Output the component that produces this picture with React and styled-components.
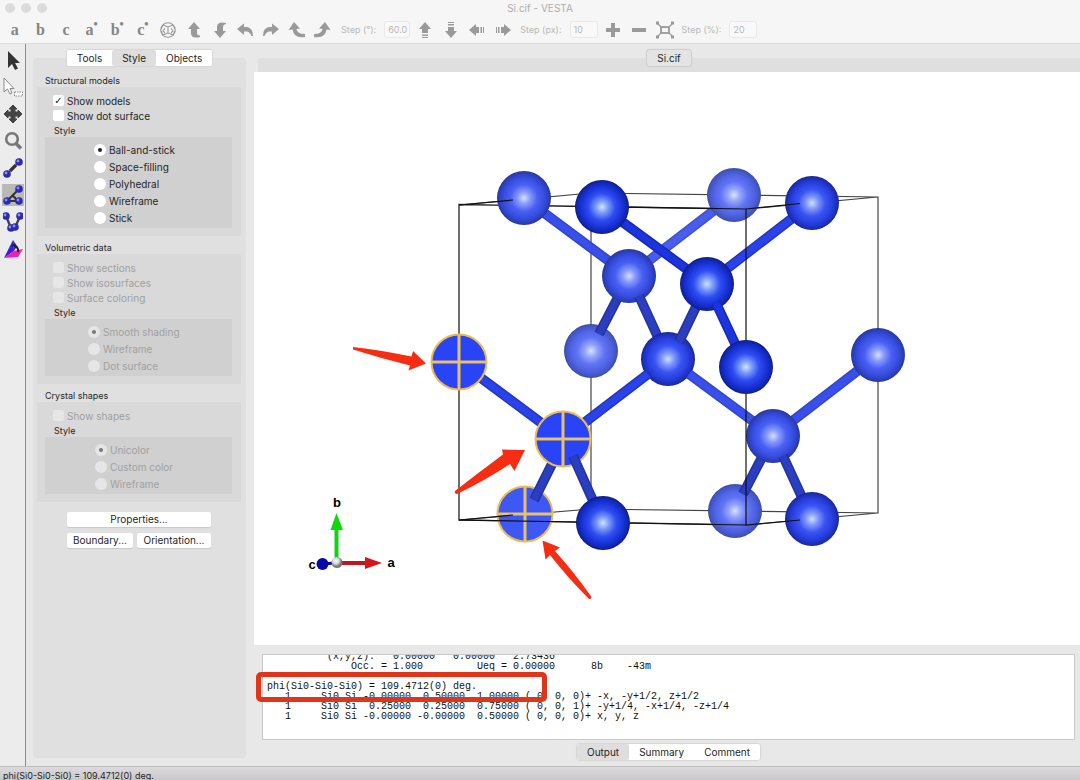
import React, { useState } from 'react';
import styled, { createGlobalStyle } from 'styled-components';

const atoms = {
	a: [524, 198, 2],
	b: [602, 207, 0],
	c: [734, 195, 3],
	d: [812, 203, 1],
	e: [629, 276, 2],
	f: [707, 284, 0],
	g: [591, 351, 3],
	h: [668, 359, 1],
	i: [746, 367, 0],
	j: [878, 355, 2],
	k: [773, 436, 2],
	l: [735, 511, 3],
	m: [812, 519, 1],
	n: [603, 523, 0]
};

const shades = [
	['#d0e6ff', '#7c9dfb', '#2f4df0', '#1a34dc', '#1024a8', '#0a1880'],
	['#d0e2ff', '#819afc', '#3a54f2', '#2840e2', '#1b2eb2', '#16268c'],
	['#d4e2ff', '#8a9dfc', '#4a60f3', '#384ee2', '#2a3db6', '#253694'],
	['#dbe4ff', '#98a8fb', '#6074f4', '#5063e4', '#4153be', '#3c4ca2']
];

const Bond = ({ from, to, depth = 1, dark }) => {
	const edge = dark ? '#22339f' : ['#1529b4', '#2336c0', '#3345ca', '#4051cc'][depth];
	const core = dark ? '#2b3ebf' : ['#1c34e0', '#2942ea', '#394fec', '#485cee'][depth];
	const line = { x1: from[0], y1: from[1], x2: to[0], y2: to[1] };
	return (
		<g>
			<line {...line} stroke={edge} strokeWidth="10" />
			<line {...line} stroke={core} strokeWidth="7" />
		</g>
	);
};

const Atom = ({ id }) => {
	const [x, y, depth] = atoms[id];
	return <circle cx={x} cy={y} r="27" fill={`url(#shade${depth})`} />;
};

const PickedAtom = ({ x, y, fill = '#2844f6' }) => (
	<g stroke="#eebc4e" strokeWidth="2">
		<circle cx={x} cy={y} r="27.5" fill={fill} />
		<path d={`M${x - 28} ${y}H${x + 28}M${x} ${y - 28}V${y + 28}`} strokeWidth="3" />
		<path d={`M${x - 27} ${y}H${x + 27}M${x} ${y - 27}V${y + 27}`} stroke="#dcc893" strokeWidth="1" />
	</g>
);

const Crystal = () => (
	<Scene viewBox="254 72 826 573" role="img" aria-label="Si unit cell">
		<defs>
			{shades.map((stops, i) => (
				<radialGradient id={`shade${i}`} key={i}>
					{stops.map((color, n) => (
						<stop key={n} offset={[0, 0.22, 0.5, 0.74, 0.94, 1][n]} stopColor={color} />
					))}
				</radialGradient>
			))}
			<radialGradient id="origin" cx="0.4" cy="0.35">
				<stop offset="0" stopColor="#fff" />
				<stop offset="0.6" stopColor="#d0d0d0" />
				<stop offset="1" stopColor="#777" />
			</radialGradient>
		</defs>

		{/* far side of the cell */}
		<path
			d="M459 205L591 193L878 197V513L591 509V193M459 520L591 509M746 525L878 513M746 209L878 197"
			fill="none"
			stroke="#444"
			strokeWidth="1.2"
		/>
		<path d="M746 209L459 204.500V520L746 525" fill="none" stroke="#222" strokeWidth="1.3" />

		<Atom id="g" />
		<Bond from={[629, 276]} to={[599, 334]} depth={2} dark />
		<Bond from={atoms.c} to={atoms.e} depth={3} />
		<Bond from={atoms.a} to={atoms.e} depth={2} />
		<Atom id="c" />
		<Atom id="a" />
		<Atom id="e" />
		<Bond from={[639, 296]} to={atoms.h} dark />
		<Atom id="h" />
		<Bond from={atoms.f} to={[679, 342]} dark />
		<Bond from={atoms.b} to={atoms.f} depth={0} />
		<Bond from={atoms.d} to={atoms.f} depth={1} />
		<Atom id="b" />
		<Atom id="d" />
		<Atom id="f" />
		<Bond from={[716, 303]} to={atoms.i} depth={0} />

		<Bond from={[648, 374]} to={[563, 439]} depth={1} />
		<Bond from={[689, 374]} to={atoms.k} depth={2} />
		<Bond from={atoms.j} to={atoms.k} depth={2} />
		<Atom id="j" />
		<Atom id="l" />
		<Bond from={atoms.k} to={[743, 494]} depth={2} dark />
		<Atom id="k" />
		<Bond from={[783, 456]} to={atoms.m} depth={2} dark />
		<Atom id="m" />

		<Bond from={[481, 378]} to={[563, 439]} depth={1} />
		<PickedAtom x={459} y={362} />
		<PickedAtom x={525} y={514} fill="#3e58f6" />
		<Bond from={[552, 464]} to={[534, 500]} dark />
		<PickedAtom x={563} y={439} />
		<Bond from={[573, 456]} to={atoms.n} dark />
		<Atom id="n" />

		{/* edges that pass in front of the atoms */}
		<g fill="none" stroke="#111" strokeWidth="1.2">
			<path d="M629 207.200L746 209L800 203.500M459 205L513 200" />
			<path d="M746 209V340M746 394V525L800 520" />
			<path d="M459 520L577 522M630 523L746 525M459 520L513 515" />
		</g>
		<Atom id="i" />

		<g fill="#f62d12">
			<path d="M353 347Q380 350 411.500 356.500L413 351L426 363.500L408.500 370.500L410 365.500Q380 358 353 349.500Z" />
			<path d="M455 491Q478 473 503 454.500L502 449.500L525 450L514.500 471L510 464Q486 480 457 494Q454 494 455 491Z" />
			<path d="M542.500 540.500L560 547.500L555 551Q574 572 591.500 597Q591 600 588.500 598.500Q568 578 550 555L545.500 559.500Z" />
		</g>

		<path d="M322 564L335 563" stroke="#0a0a90" strokeWidth="3" />
		<circle cx="322.500" cy="564" r="6" fill="#0808a8" />
		<path d="M336.500 560V528" stroke="#12d412" strokeWidth="4" />
		<path d="M336.500 513L343 530H330.500Z" fill="#0fd80f" />
		<path d="M337 563H366" stroke="#c3161c" strokeWidth="4" />
		<path d="M382 563L365 569V557Z" fill="#d5161c" />
		<circle cx="337" cy="562.500" r="5.500" fill="url(#origin)" />
		<AxisName x="337" y="507">b</AxisName>
		<AxisName x="312" y="569">c</AxisName>
		<AxisName x="391" y="567">a</AxisName>
	</Scene>
);

const Glyph = ({ children, size = 20 }) => (
	<svg width={size} height={size} viewBox="0 0 20 20" fill="currentColor" aria-hidden="true">
		{children}
	</svg>
);

const rotations = [
	['Orient freely', <g fill="none" stroke="currentColor" strokeWidth="1.1">
		<circle cx="10" cy="10" r="7.200" />
		<path d="M5 5L10 7L15 5M10 7V13M5 15L10 13L15 15M3 9L5 5M17 9L15 5M3 11L5 15M17 11L15 15M7 8.500L5 11L7 13M13 8.500L15 11L13 13" />
	</g>],
	['Rotate up', <path d="M10 2L16 9H13V13Q13 15.500 16 15.500V17Q7 19 7 13V9H4Z" />],
	['Rotate down', <path d="M10 18L4 11H7V7Q7 1 16 3V4Q13 4.500 13 7V11H16Z" />],
	['Rotate left', <path d="M2 9L9 3.500V7H12Q18 8 18 16H16.500Q15 12 12 11.500H9V15Z" />],
	['Rotate right', <path d="M18 9L11 3.500V7H8Q2 8 2 16H3.500Q5 12 8 11.500H11V15Z" />],
	['Turn counterclockwise', <path d="M7 2L13 8.500L9.500 9Q10 14 18 14V17Q7 19 5.500 9.500L1.500 10Z" />],
	['Turn clockwise', <path d="M13 2L7 8.500L10.500 9Q10 14 2 14V17Q13 19 14.500 9.500L18.500 10Z" />]
];

const moves = [
	['Move up', <path d="M10 2L16 9H13V13H7V9H4ZM7 14.500H13V16H7ZM7 17H13V18H7Z" />],
	['Move down', <path d="M10 18L16 11H13V7H7V11H4ZM7 4H13V5.500H7ZM7 2H13V3H7Z" />],
	['Move left', <path d="M2 10L9 4V7H12V13H9V16ZM13.500 7H15V13H13.500ZM16 7H17V13H16Z" />],
	['Move right', <path d="M18 10L11 4V7H8V13H11V16ZM5 7H6.500V13H5ZM3 7H4V13H3Z" />]
];

const zooms = [
	['Zoom in', <path d="M8 3H12V8H17V12H12V17H8V12H3V8H8Z" />],
	['Zoom out', <path d="M3 8H17V12H3Z" />],
	['Fit to screen', <g fill="none" stroke="currentColor" strokeWidth="1.800">
		<rect x="6" y="7" width="8" height="6" />
		<path d="M6 7L2 3M14 7L18 3M6 13L2 17M14 13L18 17" strokeWidth="1.300" />
		<path d="M1 3H4M1 17H4M16 3H19M16 17H19" strokeWidth="3" />
	</g>]
];

const Ball = ({ x, y }) => (
	<g>
		<circle cx={x} cy={y} r="3.800" fill="#2a2ab4" />
		<circle cx={x - 1} cy={y - 1} r="1.400" fill="#9292e8" />
	</g>
);

const tools = [
	['Rotate', <path d="M5 1V18L9 14L12 20L15 18.500L12 13H17Z" fill="#333" />],
	['Select', <g fill="#fff" stroke="#888">
		<path d="M1 1V15L4.500 12L7 17L9 16L7 11.500H11Z" />
		<rect x="11.500" y="15" width="8" height="4" strokeDasharray="1.500 1" />
	</g>],
	['Translate', <path d="M10 1L14 5H12V8H15V6L19 10L15 14V12H12V15H14L10 19L6 15H8V12H5V14L1 10L5 6V8H8V5H6Z" fill="#444" stroke="#444" />],
	['Magnify', <g fill="none" stroke="#777">
		<circle cx="9" cy="8" r="5.800" strokeWidth="2.600" />
		<path d="M13 12.500L18 17.500" strokeWidth="3.500" />
	</g>],
	['Distance', <g>
		<path d="M4 16L16 4" stroke="#666" strokeWidth="1.500" />
		<path d="M7 13L13 7" stroke="#333" strokeWidth="3.200" />
		<Ball x={4} y={16} /><Ball x={16} y={4} />
	</g>],
	['Bond angle', <g>
		<path d="M16 4L4 16H16M9 11Q13 12 13 16" fill="none" stroke="#333" strokeWidth="2" />
		<Ball x={16} y={4} /><Ball x={4} y={16} /><Ball x={16} y={16} />
	</g>],
	['Dihedral angle', <g>
		<path d="M3 4L8 16H12L17 4" fill="none" stroke="#444" strokeWidth="2.400" />
		<Ball x={3} y={4} /><Ball x={8} y={16} /><Ball x={12} y={15} /><Ball x={17} y={4} />
	</g>],
	['Interfacial angle', <g>
		<path d="M10 1L1 19L11 12Z" fill="#3c1cd8" />
		<path d="M10 1L11 12L14 7Z" fill="#2020a0" />
		<path d="M1 19L11 12L20 10L15 18Z" fill="#f01cb4" />
		<path d="M9 6Q16 7 15 13" fill="none" stroke="#222" strokeWidth="2" />
	</g>]
];

const output = [
	'          (x,y,z):   0.00000   0.00000   2.73436',
	'              Occ. = 1.000         Ueq = 0.00000      8b    -43m',
	'',
	'phi(Si0-Si0-Si0) = 109.4712(0) deg.',
	'   1     Si0 Si -0.00000  0.50000  1.00000 ( 0, 0, 0)+ -x, -y+1/2, z+1/2',
	'   1     Si0 Si  0.25000  0.25000  0.75000 ( 0, 0, 1)+ -y+1/4, -x+1/4, -z+1/4',
	'   1     Si0 Si -0.00000 -0.00000  0.50000 ( 0, 0, 0)+ x, y, z'
].join('\n');

const IconGroup = ({ items }) =>
	items.map(([name, drawing]) => (
		<ToolButton key={name} aria-label={name}>
			<Glyph>{drawing}</Glyph>
		</ToolButton>
	));

const Step = ({ label, value, width }) => (
	<StepLabel>
		{label}
		<StepInput defaultValue={value} $width={width} />
	</StepLabel>
);

const ModelGroup = ({ title, checks, name, options, indent, disabled }) => (
	<Group>
		<GroupTitle>{title}</GroupTitle>
		<GroupBox>
			{checks.map(([label, checked]) => (
				<Option key={label} $height={15} $disabled={disabled}>
					<Check type="checkbox" defaultChecked={checked} disabled={disabled} />
					{label}
				</Option>
			))}
			<StyleTitle>Style</StyleTitle>
			<StyleBox $indent={indent}>
				{options.map((label, index) => (
					<Option key={label} $height={17} $disabled={disabled}>
						<Radio type="radio" name={name} defaultChecked={index === 0} disabled={disabled} />
						{label}
					</Option>
				))}
			</StyleBox>
		</GroupBox>
	</Group>
);

const Tabs = ({ names, initial }) => {
	const [active, setActive] = useState(initial);
	return (
		<TabBar>
			{names.map(name => (
				<Tab key={name} $active={name === active} onClick={() => setActive(name)}>
					{name}
				</Tab>
			))}
		</TabBar>
	);
};

export const App = () => (
	<Window>
		<GlobalStyle />
		<Header>
			<TitleBar>
				<Lights>
					<Light />
					<Light />
					<Light />
				</Lights>
				<Title>Si.cif - VESTA</Title>
			</TitleBar>
			<Toolbar>
				<ViewButtons>
					{['a', 'b', 'c'].map(axis => (
						<AxisButton key={axis}>{axis}</AxisButton>
					))}
					{['a', 'b', 'c'].map(axis => (
						<AxisButton key={axis}>
							{axis}
							<Star>•</Star>
						</AxisButton>
					))}
					<IconGroup items={rotations} />
				</ViewButtons>
				<Step label="Step (°):" value="60.0" width={26} />
				<Buttons>
					<IconGroup items={moves} />
				</Buttons>
				<Step label="Step (px):" value="10" width={28} />
				<Buttons>
					<IconGroup items={zooms} />
				</Buttons>
				<Step label="Step (%):" value="20" width={28} />
			</Toolbar>
		</Header>
		<Body>
			<ToolStrip>
				{tools.map(([name, drawing]) => (
					<StripButton key={name} aria-label={name} $active={name === 'Bond angle'}>
						<Glyph>{drawing}</Glyph>
					</StripButton>
				))}
			</ToolStrip>
			<SidePanel>
				<Tabs names={['Tools', 'Style', 'Objects']} initial="Style" />
				<Groups>
					<ModelGroup
						title="Structural models"
						checks={[['Show models', true], ['Show dot surface', false]]}
						name="model"
						options={['Ball-and-stick', 'Space-filling', 'Polyhedral', 'Wireframe', 'Stick']}
						indent={49}
					/>
					<ModelGroup
						title="Volumetric data"
						checks={[['Show sections', false], ['Show isosurfaces', false], ['Surface coloring', false]]}
						name="volume"
						options={['Smooth shading', 'Wireframe', 'Dot surface']}
						indent={43}
						disabled
					/>
					<ModelGroup
						title="Crystal shapes"
						checks={[['Show shapes', false]]}
						name="shape"
						options={['Unicolor', 'Custom color', 'Wireframe']}
						indent={50}
						disabled
					/>
				</Groups>
				<Actions>
					<WideButton>Properties...</WideButton>
					<PushButton>Boundary...</PushButton>
					<PushButton>Orientation...</PushButton>
				</Actions>
			</SidePanel>
			<Main>
				<FileTabs>
					<FileTab>Si.cif</FileTab>
				</FileTabs>
				<Canvas>
					<Crystal />
				</Canvas>
				<OutputPanel>
					<Output>{output}</Output>
					<Highlight />
					<Tabs names={['Output', 'Summary', 'Comment']} initial="Output" />
				</OutputPanel>
			</Main>
		</Body>
		<StatusBar>phi(Si0-Si0-Si0) = 109.4712(0) deg.</StatusBar>
	</Window>
);

export default App;

const GlobalStyle = createGlobalStyle`
	* {
		box-sizing: border-box;
	}
	body {
		margin: 0;
		background: #e8e8e8;
		color: #262626;
		font-family: Inter, sans-serif;
		font-size: 10px;
	}
	button, input {
		margin: 0;
		padding: 0;
		border: 0;
		color: inherit;
		font: inherit;
	}
`;

const Window = styled.div`
	display: flex;
	flex-direction: column;
	min-height: 100vh;
`;

const Header = styled.header`
	background: #f6f6f6;
	border-bottom: 1px solid #dcdcdc;
	color: #adadad;
`;

const TitleBar = styled.div`
	display: grid;
	grid-template-columns: 1fr auto 1fr;
	align-items: center;
	height: 16px;
`;

const Lights = styled.div`
	display: flex;
	gap: 6px;
	padding-left: 5px;
`;

const Light = styled.span`
	width: 10px;
	height: 10px;
	border-radius: 50%;
	background: #dcdcdc;
`;

const Title = styled.h1`
	margin: 0;
	font-size: 10px;
	font-weight: 400;
`;

const Toolbar = styled.div`
	display: flex;
	align-items: center;
	height: 27px;
	padding-left: 2px;
`;

const ViewButtons = styled.div`
	display: grid;
	grid-template-columns: repeat(13, 1fr);
	width: 333px;
	margin-right: 6px;
`;

const ToolButton = styled.button`
	display: flex;
	align-items: center;
	justify-content: center;
	height: 21px;
	background: none;
	color: #9a9a9a;
`;

const AxisButton = styled(ToolButton)`
	color: #858585;
	font-family: 'Liberation Serif', serif;
	font-size: 16px;
	font-weight: 700;
`;

const Star = styled.sup`
	align-self: flex-start;
	font-size: 12px;
	line-height: 11px;
`;

const Buttons = styled.div`
	display: grid;
	grid-auto-flow: column;
	grid-auto-columns: 26px;
	margin: 0 4px 0 2px;
`;

const StepLabel = styled.label`
	display: flex;
	align-items: center;
	gap: 8px;
	color: #b8b8b8;
	font-size: 9px;
	white-space: nowrap;
`;

const StepInput = styled.input`
	width: ${props => props.$width}px;
	height: 17px;
	padding-left: 3px;
	border: 1px solid #e9e9e9;
	border-radius: 3px;
	background: #f9f9f9;
`;

const Body = styled.div`
	display: flex;
	flex: 1;
`;

const ToolStrip = styled.nav`
	display: flex;
	flex-direction: column;
	align-items: center;
	gap: 5px;
	width: 26px;
	padding-top: 5px;
	border-right: 1px solid #8f8f8f;
	background: #ececec;
`;

const StripButton = styled.button`
	display: flex;
	width: 22px;
	height: 22px;
	align-items: center;
	justify-content: center;
	background: ${props => (props.$active ? '#b9b9b9' : 'none')};
`;

const SidePanel = styled.aside`
	display: flex;
	flex-direction: column;
	width: 213px;
	margin: 14px 8px 8px 7px;
	border-radius: 3px;
	background: #e0e0e0;
`;

const TabBar = styled.div`
	display: flex;
	align-self: center;
	margin-top: -8px;
	border-radius: 3px;
	background: #fff;
	box-shadow: 0 0 1px 1px #d6d6d6;
`;

const Tab = styled.button`
	height: 16px;
	padding: 0 10px;
	border-radius: 2px;
	background: ${props => (props.$active ? '#dedede' : '#fff')};
	line-height: 16px;
`;

const Groups = styled.div`
	display: flex;
	flex-direction: column;
	gap: 6px;
	padding: 9px 5px 0 4px;
`;

const Group = styled.fieldset`
	margin: 0;
	padding: 0;
	border: 0;
	min-width: 0;
`;

const GroupTitle = styled.legend`
	padding: 0 0 0 8px;
	font-size: 9px;
	line-height: 12px;
`;

const GroupBox = styled.div`
	padding: 6px 9px 8px 8px;
	border-radius: 2px;
	background: #d9d9d9;
`;

const Option = styled.label`
	display: flex;
	align-items: center;
	gap: 3px;
	height: ${props => props.$height}px;
	padding-left: 8px;
	color: ${props => (props.$disabled ? '#a0a0a0' : 'inherit')};
`;

const Check = styled.input`
	appearance: none;
	display: grid;
	place-content: center;
	width: 11px;
	height: 11px;
	border-radius: 2px;
	background: #fff;

	&:disabled {
		background: #e6e6e6;
	}

	&:checked::after {
		content: '✓';
		color: #222;
		font: 700 10px/11px 'DejaVu Sans', sans-serif;
	}
`;

const Radio = styled(Check)`
	width: 12px;
	height: 12px;
	border-radius: 50%;

	&:checked::after {
		content: '';
		width: 4px;
		height: 4px;
		border-radius: 50%;
		background: currentColor;
	}

	&:disabled:checked::after {
		background: #777;
	}
`;

const StyleTitle = styled.h3`
	margin: 2px 0 0 9px;
	font-size: 9px;
	font-weight: 400;
	line-height: 12px;
`;

const StyleBox = styled.div`
	padding: 4px 0 2px ${props => props.$indent - 8}px;
	background: #d0d0d0;
`;

const Actions = styled.div`
	display: grid;
	grid-template-columns: 66px 74px;
	gap: 6px 4px;
	padding: 10px 0 0 34px;
`;

const PushButton = styled.button`
	height: 15px;
	border-radius: 2px;
	background: #fff;
	box-shadow: 0 1px 1px #c8c8c8;
	line-height: 15px;
`;

const WideButton = styled(PushButton)`
	grid-column: span 2;
`;

const Main = styled.main`
	display: flex;
	flex: 1;
	flex-direction: column;
	min-width: 0;
`;

const FileTabs = styled.div`
	display: flex;
	justify-content: center;
	height: 28px;
	padding-top: 6px;
	padding-left: 4px;
	background: linear-gradient(#dfdfdf, #dfdfdf) 4px 14px no-repeat;
`;

const FileTab = styled.button`
	width: 44px;
	height: 16px;
	border-radius: 3px;
	background: #e4e4e4;
	box-shadow: 0 0 1px 1px #cdcdcd;
	line-height: 16px;
`;

const Canvas = styled.section`
	display: flex;
	flex: 1;
	background: #fff;
`;

const Scene = styled.svg`
	flex: 1;
	width: 100%;
	min-height: 0;
`;

const AxisName = styled.text`
	fill: #000;
	font: 700 13px 'Liberation Sans', sans-serif;
	text-anchor: middle;
`;

const OutputPanel = styled.section`
	position: relative;
	display: flex;
	flex-direction: column;
	padding: 9px 5px 6px 8px;

	${TabBar} {
		margin-top: 4px;
	}
`;

const Output = styled.pre`
	display: flex;
	align-items: flex-end;
	height: 86px;
	margin: 0;
	padding: 0 4px 17px;
	overflow: hidden;
	border: 1px solid #c9c9c9;
	background: #fff;
	color: #111;
	font: 10px/10px 'Liberation Mono', monospace;
`;

const Highlight = styled.div`
	position: absolute;
	top: 27px;
	left: 2px;
	width: 291px;
	height: 30px;
	border: 5px solid #e23418;
	border-radius: 5px;
`;

const StatusBar = styled.footer`
	height: 15px;
	padding-left: 3px;
	border-top: 1px solid #bdbdbd;
	background: linear-gradient(#dcdadc, #c8c6c8);
	font-size: 9px;
	line-height: 18px;
	overflow: hidden;
`;
